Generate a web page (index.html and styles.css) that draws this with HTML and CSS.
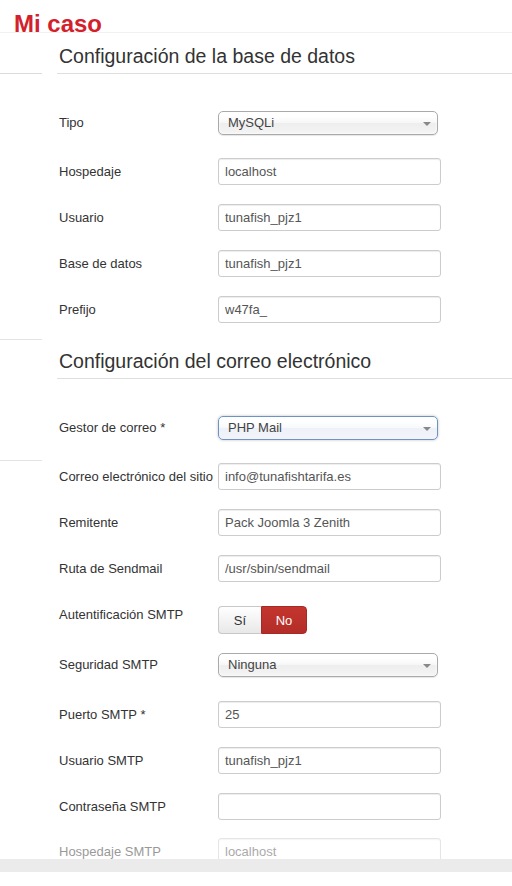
FILE: index.html
```html
<!DOCTYPE html>
<html lang="es">
<head>
<meta charset="utf-8">
<title>Mi caso</title>
<link rel="stylesheet" href="styles.css">
</head>
<body>
<div class="topbar"><span class="brand">Mi caso</span></div>
<div class="layout">
  <aside class="side">
    <div class="side-item s1"></div>
    <div class="side-item s2"></div>
    <div class="side-item s3"></div>
  </aside>
  <main class="main">
    <section class="fieldset">
      <h3 class="legend">Configuración de la base de datos</h3>
      <div class="fields">
        <div class="field sel-row"><label>Tipo</label><div class="select"><span>MySQLi</span><i class="arrow"></i></div></div>
        <div class="field"><label>Hospedaje</label><input class="input" type="text" value="localhost"></div>
        <div class="field"><label>Usuario</label><input class="input" type="text" value="tunafish_pjz1"></div>
        <div class="field"><label>Base de datos</label><input class="input" type="text" value="tunafish_pjz1"></div>
        <div class="field last"><label>Prefijo</label><input class="input" type="text" value="w47fa_"></div>
      </div>
    </section>
    <section class="fieldset">
      <h3 class="legend">Configuración del correo electrónico</h3>
      <div class="fields">
        <div class="field sel-row"><label>Gestor de correo *</label><div class="select active"><span>PHP Mail</span><i class="arrow"></i></div></div>
        <div class="field"><label>Correo electrónico del sitio</label><input class="input" type="text" value="info@tunafishtarifa.es"></div>
        <div class="field"><label>Remitente</label><input class="input" type="text" value="Pack Joomla 3 Zenith"></div>
        <div class="field"><label>Ruta de Sendmail</label><input class="input" type="text" value="/usr/sbin/sendmail"></div>
        <div class="field toggle-row"><label>Autentificación SMTP</label>
          <div class="toggle"><span class="opt yes">Sí</span><span class="opt no">No</span></div>
        </div>
        <div class="field sel-row sel-wide"><label>Seguridad SMTP</label><div class="select"><span>Ninguna</span><i class="arrow"></i></div></div>
        <div class="field"><label>Puerto SMTP *</label><input class="input" type="text" value="25"></div>
        <div class="field"><label>Usuario SMTP</label><input class="input" type="text" value="tunafish_pjz1"></div>
        <div class="field tight"><label>Contraseña SMTP</label><input class="input" type="password" value=""></div>
        <div class="field faded"><label>Hospedaje SMTP</label><input class="input" type="text" value="localhost"></div>
      </div>
    </section>
  </main>
</div>
<div class="hscroll"></div>
</body>
</html>
```
FILE: styles.css
```css
* { box-sizing: border-box; }
html, body { margin: 0; padding: 0; background: #fff; }
body {
  font-family: "Liberation Sans", Arial, sans-serif;
  color: #333;
  width: 512px;
  height: 886px;
  overflow: hidden;
}

.topbar {
  height: 33px;
  border-bottom: 1px solid #f1f1f1;
  padding: 10px 0 0 14px;
}
.brand {
  display: block;
  font-weight: bold;
  font-size: 24px;
  line-height: 28px;
  color: #d3212c;
}

.layout {
  display: grid;
  grid-template-columns: 42px 1fr;
  column-gap: 15px;
  height: 826px;
  overflow: hidden;
}

.side-item { border-bottom: 1px solid #e4e4e4; }
.side-item.s1 { height: 41px; border-bottom-color: #dcdcdc; }
.side-item.s2 { height: 266px; }
.side-item.s3 { height: 121px; }

.main { padding-top: 11px; }

.legend {
  margin: 0;
  font-weight: normal;
  font-size: 19.5px;
  line-height: 24px;
  color: #333;
  padding: 0 0 5px 2px;
  border-bottom: 1px solid #dedede;
}

.fields { padding: 37px 0 0 2px; }

.field {
  display: flex;
  align-items: center;
  margin-bottom: 19px;
}
.field label {
  width: 159px;
  flex: none;
  font-size: 13px;
  line-height: 18px;
  color: #333;
}
.field.sel-row { margin-bottom: 23px; }
.field.sel-wide { margin-bottom: 24px; }
.field.last { margin-bottom: 26px; }
.field.tight { margin-bottom: 18px; }
.field.toggle-row { margin-top: 24px; align-items: flex-start; }
.field.toggle-row label { margin-top: 0; }

.input {
  width: 223px;
  height: 27px;
  border: 1px solid #ccc;
  border-radius: 3px;
  box-shadow: inset 0 1px 1px rgba(0,0,0,.075);
  padding: 0 6px;
  font-family: "Liberation Sans", Arial, sans-serif;
  font-size: 13px;
  font-weight: normal;
  color: #555;
  background: #fff;
  margin: 0;
  outline: none;
}

.select {
  position: relative;
  width: 220px;
  height: 24px;
  border: 1px solid #aaa;
  border-radius: 5px;
  background: linear-gradient(#fff 20%, #f6f6f6 50%, #eee 52%, #f4f4f4 100%);
  box-shadow: inset 0 0 3px #fff, 0 1px 1px rgba(0,0,0,.1);
  padding-left: 9px;
  font-size: 13px;
  font-weight: normal;
  line-height: 22px;
  color: #444;
}
.select.active {
  border-color: #6e92c4;
  background: linear-gradient(#fff 20%, #f6f8fb 50%, #eef2f8 52%, #f1f4f9 100%);
  box-shadow: 0 0 3px rgba(0,0,0,.25);
}
.arrow {
  position: absolute;
  right: 6px;
  top: 10px;
  width: 0;
  height: 0;
  border-left: 4px solid transparent;
  border-right: 4px solid transparent;
  border-top: 4px solid #888;
}

.toggle {
  display: flex;
  height: 28px;
  font-size: 13px;
}
.opt {
  display: flex;
  align-items: center;
  justify-content: center;
  height: 28px;
}
.opt.yes {
  width: 43px;
  border: 1px solid #c8c8c8;
  border-right: none;
  border-radius: 4px 0 0 4px;
  background: linear-gradient(#fff, #e8e8e8);
  color: #333;
}
.opt.no {
  width: 46px;
  border-radius: 0 4px 4px 0;
  background: linear-gradient(#c3352e, #b42d28);
  color: #fff;
  border: 1px solid #a52a24;
}

.field.faded { opacity: .5; }

.hscroll {
  height: 13px;
  background: #ebebeb;
}
```
